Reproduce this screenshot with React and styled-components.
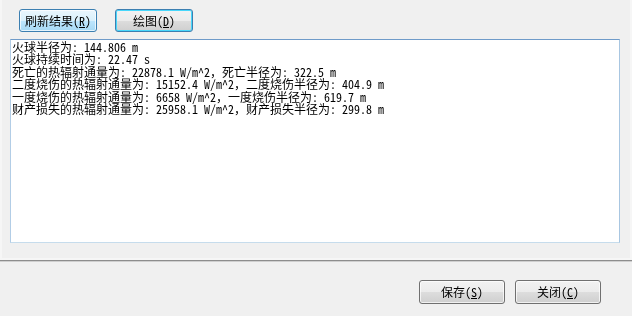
import React from "react"
import styled, { createGlobalStyle } from "styled-components"

const Global = createGlobalStyle`
	html, body {
		margin: 0;
		padding: 0;
		background: #f0f0f0;
	}
	body {
		font-family: "Noto Sans Mono CJK SC", "Noto Sans CJK SC", monospace;
		font-size: 12px;
		color: #000;
	}
`

const Window = styled.div`
	width: 632px;
	height: 316px;
	display: flex;
	flex-direction: column;
	background: #f0f0f0;
	overflow: hidden;
`

const Top = styled.div`
	background: #f6f6f6;
	padding: 0 2px 2px;
`

const Panel = styled.div`
	height: 258px;
	box-sizing: border-box;
	background: #f0f0f0;
	padding: 9px 10px 0 8px;
	display: flex;
	flex-direction: column;
	gap: 7px;
`

const Toolbar = styled.div`
	display: flex;
	gap: 18px;
	padding-left: 9px;
`

const Button = styled.button`
	width: ${p => p.$w}px;
	height: ${p => p.$h}px;
	box-sizing: border-box;
	padding: 0;
	margin: 0;
	font-family: inherit;
	font-size: 12px;
	color: #000;
	border-radius: 3px;
	border: 1px solid ${p => (p.$variant === "plain" ? "#707070" : "#3c7fb1")};
	background: ${p =>
		p.$variant === "hover"
			? "linear-gradient(#eaf6fd 0%, #d9f0fc 50%, #bee6fd 51%, #a7d9f5 100%)"
			: "linear-gradient(#f2f2f2 0%, #ebebeb 50%, #dddddd 51%, #cfcfcf 100%)"};
	box-shadow: ${p =>
		p.$variant === "focus"
			? "inset 0 0 0 1px #48d7fb"
			: "inset 0 0 0 1px rgba(255,255,255,0.7)"};
	display: flex;
	align-items: center;
	justify-content: center;
	line-height: 12px;
	cursor: default;
`

const Label = styled.span`
	filter: grayscale(1);
`

const Key = styled.span`
	text-decoration: underline;
`

const Output = styled.div`
	flex: none;
	height: 204px;
	box-sizing: border-box;
	background: #fff;
	border: 1px solid;
	border-color: #6f9bc9 #a8c6e1 #c6dcec #b2cde6;
	padding: 1px 1px;
	font-size: 12px;
	line-height: 12.4px;
	white-space: pre;
	overflow: hidden;
`

const Text = styled.div`
	filter: grayscale(1);
`

const Line = styled.div``

const Separator = styled.div`
	border-top: 1px solid #8d8d8d;
	border-bottom: 1px solid #cfcfcf;
`

const Footer = styled.div`
	flex: 1;
	display: flex;
	justify-content: flex-end;
	gap: 10px;
	padding: 18px 31px 0 0;
`

const lines = [
	"火球半径为: 144.806 m",
	"火球持续时间为: 22.47 s",
	"死亡的热辐射通量为: 22878.1 W/m^2，死亡半径为: 322.5 m",
	"二度烧伤的热辐射通量为: 15152.4 W/m^2，二度烧伤半径为: 404.9 m",
	"一度烧伤的热辐射通量为: 6658 W/m^2，一度烧伤半径为: 619.7 m",
	"财产损失的热辐射通量为: 25958.1 W/m^2，财产损失半径为: 299.8 m",
]

export default function App() {
	return (
		<>
			<Global />
			<Window>
				<Top>
					<Panel>
						<Toolbar>
							<Button $w={78} $h={23} $variant="hover">
								<Label>刷新结果(<Key>R</Key>)</Label>
							</Button>
							<Button $w={78} $h={23} $variant="focus">
								<Label>绘图(<Key>D</Key>)</Label>
							</Button>
						</Toolbar>
						<Output>
							<Text>
								{lines.map(l => (
									<Line key={l}>{l}</Line>
								))}
							</Text>
						</Output>
					</Panel>
				</Top>
				<Separator />
				<Footer>
					<Button $w={86} $h={24} $variant="plain">
						<Label>保存(<Key>S</Key>)</Label>
					</Button>
					<Button $w={86} $h={24} $variant="plain">
						<Label>关闭(<Key>C</Key>)</Label>
					</Button>
				</Footer>
			</Window>
		</>
	)
}
